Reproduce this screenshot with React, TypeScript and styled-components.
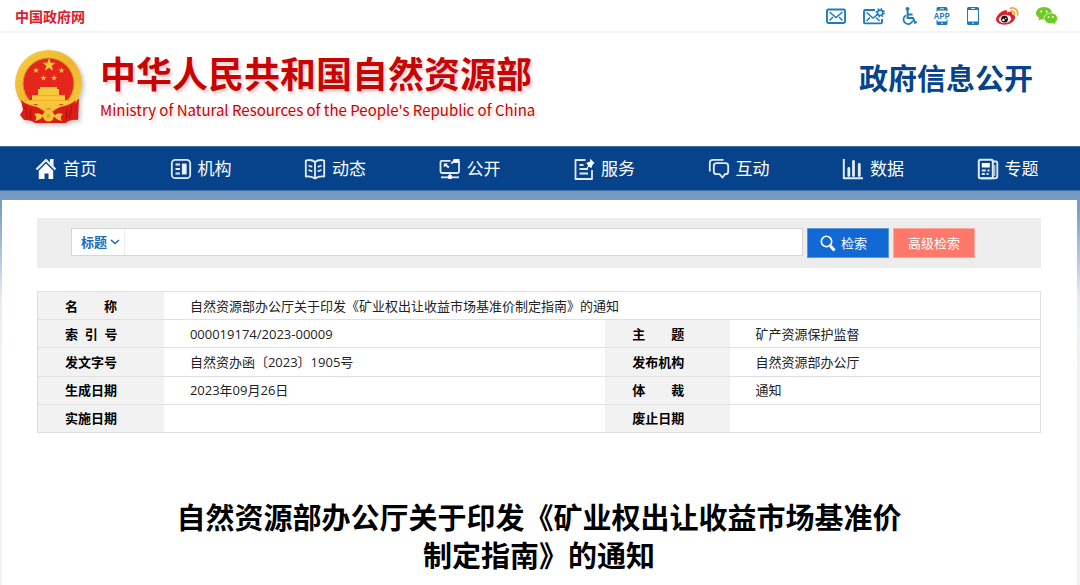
import React from 'react';
import styled, { createGlobalStyle } from 'styled-components';

const Global = createGlobalStyle`
  * { box-sizing: border-box; }
  body {
    margin: 0;
    background: #fff;
    color: #222;
    font-family: "Open Sans", "Noto Sans CJK SC", sans-serif;
    font-size: 13px;
  }
  a { color: inherit; text-decoration: none; }
`;

const TopBar = styled.div`
  display: flex;
  align-items: center;
  justify-content: space-between;
  height: 33px;
  padding: 0 22px 0 15px;
  border-bottom: 2px solid #f4f4f4;
`;
const GovLink = styled.a`
  color: #d8202c;
  font-size: 14px;
  font-weight: 700;
  line-height: 20px;
  padding-top: 2px;
`;
const Tools = styled.nav`
  display: flex;
  align-items: center;
  gap: 17px;
`;
const ToolLink = styled.a`
  display: flex;
  svg { display: block; }
`;

const Header = styled.header`
  display: flex;
  align-items: flex-start;
  justify-content: space-between;
  height: 113px;
  padding: 16px 47px 0 12px;
`;
const Brand = styled.a`
  display: flex;
  gap: 12px;
`;
const BrandText = styled.div`
  color: #c80404;
  text-shadow: 2px 3px 3px rgba(190, 30, 30, 0.2);
  white-space: nowrap;
`;
const BrandName = styled.div`
  font-size: 36px;
  font-weight: 700;
  line-height: 52px;
`;
const BrandEnglish = styled.div`
  font-family: "Noto Sans CJK SC", sans-serif;
  font-size: 15px;
  line-height: 18px;
`;
const Section = styled.div`
  color: #07438a;
  font-size: 29px;
  font-weight: 700;
  line-height: 44px;
  padding-top: 8px;
`;

const NavBar = styled.nav`
  display: grid;
  grid-template-columns: repeat(8, 1fr);
  height: 44px;
  padding: 0 2px;
  background: #07438a;
  border-top: 1px solid #3f70a8;
`;
const NavLink = styled.a`
  display: flex;
  align-items: center;
  gap: 6px;
  padding-left: 33px;
  color: #fff;
  font-size: 17px;
  line-height: 24px;
  svg { display: block; flex: none; }
`;

const Backdrop = styled.div`
  padding: 9px 3px 0 2px;
  border-top: 1px solid #3f70a8;
  background: linear-gradient(#7598c1, #7f9fc4 20px, #e8edf3 110px, #f3f3f5 180px);
`;
const Page = styled.main`
  min-height: 386px;
  padding: 18px 36px 0 35px;
  background: #fff;
`;

const SearchBar = styled.form`
  display: flex;
  align-items: flex-start;
  height: 50px;
  padding: 10px 62px 0 34px;
  background: #ededed;
`;
const SearchBox = styled.div`
  display: flex;
  flex: 1;
  height: 28px;
  margin-right: 4px;
  border: 1px solid #d6d6d6;
  background: #fff;
`;
const FieldPicker = styled.label`
  display: flex;
  align-items: center;
  width: 53px;
  border-right: 1px solid #ececec;
  padding-left: 9px;
  svg { display: block; flex: none; pointer-events: none; }
`;
const FieldSelect = styled.select`
  appearance: none;
  width: 29px;
  padding: 0;
  border: 0;
  background: transparent;
  color: #1a6bb8;
  font: 700 13px/20px "Open Sans", "Noto Sans CJK SC", sans-serif;
`;
const Keyword = styled.input`
  flex: 1;
  min-width: 0;
  padding: 0 8px;
  border: 0;
  background: transparent;
  font: inherit;
`;
const SearchButton = styled.button<{ $tone: string; $edge: string }>`
  display: flex;
  align-items: center;
  justify-content: center;
  gap: 5px;
  width: 82px;
  height: 30px;
  margin-right: 4px;
  padding: 0;
  border: 1px solid ${p => p.$edge};
  background: ${p => p.$tone};
  color: #fff;
  font: 13px/20px "Open Sans", "Noto Sans CJK SC", sans-serif;
`;
const SubmitButton = styled(SearchButton)`
  justify-content: flex-start;
  padding-left: 12px;
`;

const Info = styled.table`
  width: 100%;
  height: 142px;
  margin-top: 23px;
  border: 1px solid #e0e0e0;
  border-collapse: collapse;
  table-layout: fixed;
`;
const InfoRow = styled.tr`
  border-bottom: 1px solid #e0e0e0;
`;
const Label = styled.th`
  padding: 0 0 0 27px;
  background: #f2f2f2;
  color: #000;
  font-weight: 700;
  line-height: 20px;
  text-align: left;
  white-space: nowrap;
`;
const Value = styled.td`
  padding: 0 0 0 26px;
  line-height: 20px;
`;
const Title = styled.h1`
  max-width: 740px;
  margin: 66px auto 0;
  color: #000;
  font-size: 29px;
  font-weight: 700;
  line-height: 38px;
  text-align: center;
`;

const BLUE = '#1f7ab9';

const starPoints = (cx: number, cy: number, r: number) =>
  Array.from({ length: 10 }, (_, i) => {
    const a = -Math.PI / 2 + (i * Math.PI) / 5;
    const q = i % 2 ? r * 0.4 : r;
    return `${(cx + q * Math.cos(a)).toFixed(2)},${(cy + q * Math.sin(a)).toFixed(2)}`;
  }).join(' ');

const Emblem = () => (
  <svg width="76" height="80" viewBox="0 0 76 80" aria-hidden="true">
    <defs>
      <linearGradient id="gold" x1="0" y1="0" x2="1" y2="1">
        <stop offset="0" stopColor="#f8cf45" />
        <stop offset="0.5" stopColor="#eeb62e" />
        <stop offset="1" stopColor="#f7cd3d" />
      </linearGradient>
      <filter id="drop" x="-20%" y="-20%" width="150%" height="150%">
        <feDropShadow dx="2" dy="2" stdDeviation="2" floodColor="#777" floodOpacity="0.45" />
      </filter>
    </defs>
    <g filter="url(#drop)">
      <path d="M10 50 L12 71 Q18 70 23 74 L54 74 Q58 70 66 71 L67 50Z" fill="#d81a18" />
      <circle cx="36.5" cy="34.5" r="33.5" fill="url(#gold)" />
      <circle cx="36.5" cy="34.5" r="29.5" fill="none" stroke="#e6ae2b" strokeWidth="1" strokeDasharray="1 4" />
      <circle cx="36.5" cy="34.5" r="25.5" fill="#e5261e" stroke="#d59c20" strokeWidth="1" />
      <g fill="#f7c83b">
        <polygon points={starPoints(37, 16, 7)} />
        <polygon points={starPoints(24, 21.5, 3.2)} />
        <polygon points={starPoints(49.5, 21.5, 3.2)} />
        <polygon points={starPoints(31.5, 29, 3.2)} />
        <polygon points={starPoints(42, 29, 3.2)} />
        <path d="M28 38 h17 v2 h2 v3 h-21 v-3 h2z M26 43 h21 v3 h6 v5 h9 l-3 4 h-46 l-3 -4 h10 v-5 h6z" />
      </g>
      <path d="M20 46.500h33M12 51.500h49" stroke="#e39d22" strokeWidth="0.6" />
      <path d="M9 51 Q16 57 26 58 L33 63 L24 72 L12 71 L8 66 L11 61Z M64 51 Q57 57 47 58 L40 63 L49 72 L61 71 L66 66 L62 61Z" fill="#dc1c19" />
      <path d="M13 57l3 13M18 60l1 11M60 57l-3 13M55 60l-1 11" stroke="#a90e10" strokeWidth="1" />
      <path d="M23 57 Q31 51 36.5 55 Q42 51 50 57 Q43 62 36.500 59 Q30 62 23 57Z M22 65 q6 -2 9 2 q-2 4 -8 5 q3 -4 -1 -7z M51 65 q-6 -2 -9 2 q2 4 8 5 q-3 -4 1 -7z" fill="#f5c43a" />
      <circle cx="36.5" cy="67" r="5.5" fill="#f5c43a" />
      <circle cx="36.5" cy="67" r="2" fill="#e2a72c" />
    </g>
  </svg>
);

const MailIcon = () => (
  <svg width="20" height="16" viewBox="0 0 20 16" fill="none" stroke={BLUE} strokeWidth="1.9" aria-hidden="true">
    <rect x="1" y="1.5" width="18" height="13.5" rx="1.2" />
    <path d="M3.500 4l6.500 5.500L16.500 4M3.500 12.500l3.500-3.500M16.500 12.500L13 9" strokeWidth="1.5" />
  </svg>
);
const MailGearIcon = () => (
  <svg width="22" height="18" viewBox="0 0 22 18" fill="none" stroke={BLUE} strokeWidth="1.9" aria-hidden="true">
    <path d="M12 3H2.200Q1 3 1 4.200v11q0 1.200 1.200 1.200h15.600q1.200 0 1.200-1.200V12" />
    <path d="M3.500 5.500l6.500 5.500 4-3M3.500 14l3.500-3.500M16.500 14L13 10.500" strokeWidth="1.5" />
    <circle cx="17.2" cy="5.8" r="2.700" strokeWidth="1.7" />
    <circle cx="17.2" cy="5.8" r="4" strokeWidth="1.500" strokeDasharray="1.570 1.570" />
  </svg>
);
const WheelchairIcon = () => (
  <svg width="15" height="18" viewBox="0 0 15 18" fill="none" stroke={BLUE} strokeWidth="2" aria-hidden="true">
    <circle cx="5.500" cy="2" r="2" fill={BLUE} stroke="none" />
    <path d="M5.600 4v7h5.400l2 4.700 1.700-.7M5.600 7.500h5" />
    <path d="M4 8.200a4.700 4.700 0 1 0 6.700 5.600" strokeWidth="1.700" />
  </svg>
);
const AppIcon = () => (
  <svg width="16" height="18" viewBox="0 0 16 18" aria-hidden="true">
    <path d="M2.500 4.500V1.500Q2.500 0 4 0h8q1.500 0 1.500 1.500V4.500h-1V3.500h-9V4.500zM2.500 13h1v1.500h9v-1.500h1v3.500q0 1.500-1.500 1.500H4q-1.500 0-1.500-1.500z" fill={BLUE} />
    <path d="M6 1.800h4M7 16.200h2" stroke="#fff" strokeWidth="0.800" />
    <text x="8" y="12" textAnchor="middle" fontFamily="Noto Sans CJK SC, sans-serif" fontWeight="700" fontSize="8" fill={BLUE}>APP</text>
  </svg>
);
const PhoneIcon = () => (
  <svg width="12" height="18" viewBox="0 0 12 18" aria-hidden="true">
    <path d="M1.500 0h9Q12 0 12 1.500v15q0 1.500-1.500 1.500h-9Q0 18 0 16.500v-15Q0 0 1.500 0zM1 3v11.500h10V3z" fillRule="evenodd" fill={BLUE} />
    <path d="M4 1.500h4M5 16.200h2" stroke="#fff" strokeWidth="0.800" />
  </svg>
);
const WeiboIcon = () => (
  <svg width="23" height="18" viewBox="0 0 23 18" aria-hidden="true">
    <path d="M9 3.300c1.700-.5 2.600.5 2.100 2.300 2.800-1.300 5.700-1 5 1.600 2.500.8 3.600 2.200 2.700 4.600-1.300 3.500-5.600 5.800-10 5.900C4 17.800.3 15.800.1 12.500-.1 9 5 4.300 9 3.300z" fill="#df1f2a" />
    <ellipse cx="9" cy="12" rx="6.300" ry="4.100" fill="#fff" transform="rotate(-7 9 12)" />
    <circle cx="8.500" cy="12.200" r="3.400" fill="#16110f" />
    <circle cx="7.400" cy="13" r="1.200" fill="#fff" />
    <circle cx="9.700" cy="11.500" r="0.700" fill="#fff" />
    <path d="M14.500 1.200c4.500-1.200 8 2 7 6.800M14.700 4.300c2.500-.6 4.100 1 3.600 3.200" fill="none" stroke="#f6a532" strokeWidth="1.700" strokeLinecap="round" />
  </svg>
);
const WechatIcon = () => (
  <svg width="22" height="18" viewBox="0 0 22 18" aria-hidden="true">
    <path d="M8 0c4.500 0 8 2.800 8 6.300S12.500 12.500 8 12.500c-1 0-1.900-.1-2.700-.3L2.500 13.800l.7-2.700C1.200 9.900 0 8.200 0 6.300 0 2.800 3.500 0 8 0z" fill="#6fca24" />
    <circle cx="5.300" cy="4.500" r="1" fill="#fff" /><circle cx="10.700" cy="4.500" r="1" fill="#fff" />
    <path d="M14.800 6c3.800 0 6.700 2.400 6.700 5.400 0 1.700-.9 3.100-2.300 4.100l.4 2.300-2.400-1.300c-.8.200-1.600.3-2.400.3-3.800 0-6.700-2.400-6.700-5.400S11 6 14.800 6z" fill="#6fca24" stroke="#fff" strokeWidth="0.700" />
    <circle cx="12.600" cy="9.900" r="0.900" fill="#fff" /><circle cx="17" cy="9.900" r="0.900" fill="#fff" />
  </svg>
);

const NavSvg = ({ children }: { children: React.ReactNode }) => (
  <svg width="22" height="22" viewBox="0 0 22 22" fill="none" stroke="#e3ecf6" strokeWidth="1.800" strokeLinejoin="round" aria-hidden="true">{children}</svg>
);
const navItems = [
  { text: '首页', icon: <NavSvg><path d="M1.500 11.500L11 2l9.500 9.500" strokeWidth="2.400" /><path d="M15 1h3.500v7.500l-3.500-3.500z" fill="#fff" stroke="none" /><path d="M11 5.500l7.200 7.200V21H13.500v-5.500h-4v5.500H3.800v-8.300z" fill="#fff" stroke="none" /></NavSvg> },
  { text: '机构', icon: <NavSvg><rect x="1.800" y="1.800" width="18.400" height="18.400" rx="3.500" /><path d="M5.500 6.500H10M5.500 11H10M5.500 15.500H10" strokeWidth="2.200" /><rect x="12.800" y="6.300" width="3" height="9.400" fill="#fff" /></NavSvg> },
  { text: '动态', icon: <NavSvg><path d="M11 4Q7.500 1 1.800 2.500v16Q7 17.800 11 20.500q4-2.700 9.200-2v-16Q14.500 1 11 4zM11 4v16" /><path d="M4.500 7.500l3.800 1.300M4.500 12l3.800 1.300M17.500 7.500l-3.800 1.300M17.500 12l-3.800 1.300" /></NavSvg> },
  { text: '公开', icon: <NavSvg><path d="M11.500 2.800H3q-1.500 0-1.500 1.500V13.500q0 1.500 1.500 1.500h15.500q1.500 0 1.500-1.500V4H14.500q-1.500 0-2 1.800" /><path d="M13.500 4l1.200-3h5.800v3z" fill="#fff" stroke="none" /><path d="M4.800 5.500h4l-1 1.200 2.700 2-1.300 1.600-2.800-2.300-1.600 1.500z" fill="#fff" stroke="none" /><path d="M2 19.300h18" /><path d="M11 15v2" /><rect x="9" y="17" width="4" height="4" rx="1" fill="#fff" stroke="none" /></NavSvg> },
  { text: '服务', icon: <NavSvg><path d="M12.500 2H2.500v19h16.500V12" /><path d="M6.500 7h4M6.500 11h8.500M6.500 15.500h8.500" /><path d="M17 0.500l4.700 4.700-1.700.8-1.800 4.300-2-1.600-3 2 2-3.300-2-2.400 4-1.500z" fill="#fff" stroke="none" /></NavSvg> },
  { text: '互动', icon: <NavSvg><path d="M1.800 13.500V5q0-3.200 3.200-3.200H15.500" /><path d="M8.500 5.200h9q2.700 0 2.700 2.700v5.500q0 2.700-2.700 2.700H17l-2.500 3.400-3-3.400h-3q-2.700 0-2.700-2.700v-5.500q0-2.700 2.700-2.700z" /></NavSvg> },
  { text: '数据', icon: <NavSvg><path d="M1.800 1v19.300H21" strokeWidth="2" /><path d="M6.800 10.500v7M11.500 3.500v14M17.300 6.500v11" strokeWidth="2.800" strokeLinecap="round" /></NavSvg> },
  { text: '专题', icon: <NavSvg><rect x="1.800" y="1.800" width="14" height="18.400" rx="1.500" strokeWidth="2" /><path d="M16 3.500h3q1.300 0 1.300 1.300v13.500q0 2-2.500 2H4" /><path d="M17.800 7v11" strokeWidth="1" /><rect x="4.800" y="5" width="8" height="4.500" fill="#fff" stroke="none" /><path d="M4.800 12.500h4M10.500 12.500h2M4.800 16h3M9.500 16h2" /></NavSvg> },
];

const tools = [
  { name: '邮箱', icon: <MailIcon /> },
  { name: '邮箱设置', icon: <MailGearIcon /> },
  { name: '无障碍', icon: <WheelchairIcon /> },
  { name: '客户端', icon: <AppIcon /> },
  { name: '手机版', icon: <PhoneIcon /> },
  { name: '微博', icon: <WeiboIcon /> },
  { name: '微信', icon: <WechatIcon /> },
];

const rows = [
  ['索\u00a0\u00a0引\u00a0\u00a0号', '000019174/2023-00009', '主\u3000\u3000题', '矿产资源保护监督'],
  ['发文字号', '自然资办函〔2023〕1905号', '发布机构', '自然资源部办公厅'],
  ['生成日期', '2023年09月26日', '体\u3000\u3000裁', '通知'],
  ['实施日期', '', '废止日期', ''],
];

export default function App() {
  return (
    <>
      <Global />
      <TopBar>
        <GovLink href="#">中国政府网</GovLink>
        <Tools>
          {tools.map(t => <ToolLink key={t.name} href="#" aria-label={t.name}>{t.icon}</ToolLink>)}
        </Tools>
      </TopBar>
      <Header>
        <Brand href="#">
          <Emblem />
          <BrandText>
            <BrandName>中华人民共和国自然资源部</BrandName>
            <BrandEnglish>Ministry of Natural Resources of the People's Republic of China</BrandEnglish>
          </BrandText>
        </Brand>
        <Section>政府信息公开</Section>
      </Header>
      <NavBar>
        {navItems.map(n => <NavLink key={n.text} href="#">{n.icon}{n.text}</NavLink>)}
      </NavBar>
      <Backdrop>
        <Page>
          <SearchBar onSubmit={e => e.preventDefault()}>
            <SearchBox>
              <FieldPicker>
                <FieldSelect aria-label="检索字段"><option>标题</option></FieldSelect>
                <svg width="10" height="10" viewBox="0 0 10 10" fill="none" stroke="#1a6bb8" strokeWidth="1.600" aria-hidden="true"><path d="M1 3l4 3.500L9 3" /></svg>
              </FieldPicker>
              <Keyword type="text" aria-label="关键词" />
            </SearchBox>
            <SubmitButton type="submit" $tone="#1369d3" $edge="#5c97dd">
              <svg width="16" height="17" viewBox="0 0 16 17" fill="none" stroke="#fff" aria-hidden="true"><circle cx="6.500" cy="6.500" r="5.200" strokeWidth="1.600" /><path d="M10.500 11l4 4.500" strokeWidth="3" /></svg>
              检索
            </SubmitButton>
            <SearchButton type="button" $tone="#ff7869" $edge="#fda79d">高级检索</SearchButton>
          </SearchBar>
          <Info>
            <colgroup>
              <col style={{ width: '12.6%' }} />
              <col style={{ width: '44%' }} />
              <col style={{ width: '12.4%' }} />
              <col />
            </colgroup>
            <tbody>
              <InfoRow>
                <Label scope="row">{'名\u3000\u3000称'}</Label>
                <Value colSpan={3}>自然资源部办公厅关于印发《矿业权出让收益市场基准价制定指南》的通知</Value>
              </InfoRow>
              {rows.map(r => (
                <InfoRow key={r[0]}>
                  <Label scope="row">{r[0]}</Label>
                  <Value>{r[1]}</Value>
                  <Label scope="row">{r[2]}</Label>
                  <Value>{r[3]}</Value>
                </InfoRow>
              ))}
            </tbody>
          </Info>
          <Title>自然资源部办公厅关于印发《矿业权出让收益市场基准价制定指南》的通知</Title>
        </Page>
      </Backdrop>
    </>
  );
}
